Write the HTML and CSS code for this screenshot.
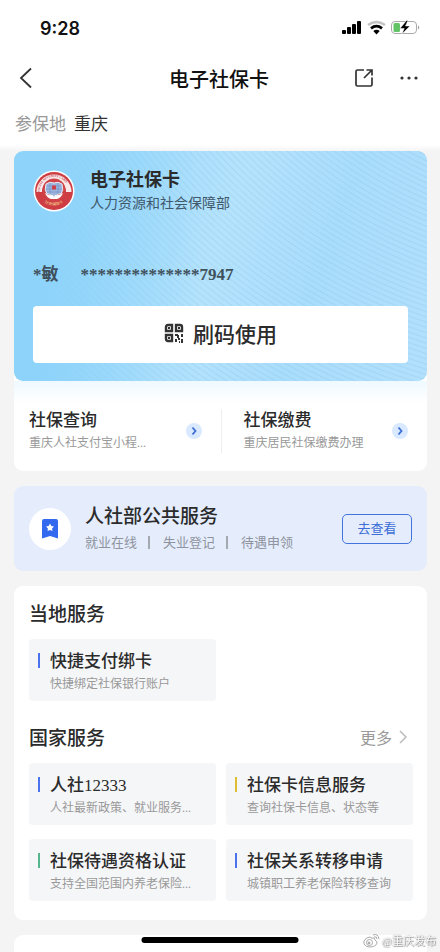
FILE: index.html
```html
<!DOCTYPE html>
<html lang="zh-CN">
<head>
    <meta charset="UTF-8">
    <meta name="viewport" content="width=device-width, initial-scale=1.0">
    <title>电子社保卡</title>
    <link rel="stylesheet" href="styles.css">
</head>
<body>
    <header class="header">
        <div class="status-bar">
            <span class="time">9:28</span>
            <svg width="80" height="16" viewBox="0 0 80 16" aria-hidden="true">
                <rect x="1" y="10" width="4" height="4" rx="1"/>
                <rect x="6" y="7" width="4" height="7" rx="1"/>
                <rect x="11" y="4" width="4" height="10" rx="1"/>
                <rect x="16" y="1" width="4" height="13" rx="1"/>
                <path d="M27 5Q35.500 -1 44 5" fill="none" stroke="#c4c4c4" stroke-width="2.400"/>
                <path d="M30 8.300Q35.500 4 41 8.300" fill="none" stroke="#000" stroke-width="2.800"/>
                <path d="M32.300 11Q35.500 8.600 38.700 11L35.500 14.500z"/>
                <rect x="50.500" y="1.500" width="25" height="12" rx="3.500" fill="#fff" stroke="#aaa"/>
                <rect x="52.500" y="3" width="6.500" height="9" rx="1.500" fill="#62c466"/>
                <path d="M65.500 0.500L59 8.500h4.200L61 14l8-8h-4.500l2.500-5.500z" stroke="#fff" stroke-width="0.500"/>
                <path d="M77 5.500q2.500 2 0 4z" fill="#999"/>
            </svg>
        </div>
        <nav class="nav-bar">
            <button class="icon-btn" type="button" aria-label="返回">
                <svg width="14" height="22" viewBox="0 0 14 22"><path d="M12 1.500L2 11l10 9.500" fill="none" stroke="#333" stroke-width="1.800"/></svg>
            </button>
            <h1>电子社保卡</h1>
            <div class="nav-actions">
                <button class="icon-btn" type="button" aria-label="分享">
                    <svg width="20" height="20" viewBox="0 0 20 20"><path d="M10 2H3.500Q2 2 2 3.500v13Q2 18 3.500 18h13q1.500 0 1.500-1.500V9.500M12.500 2H18v5.500M18 2l-8 8" fill="none" stroke="#333" stroke-width="1.700"/></svg>
                </button>
                <button class="icon-btn" type="button" aria-label="更多操作">
                    <svg width="20" height="20" viewBox="0 0 20 20" fill="#333"><circle cx="3" cy="10" r="1.600"/><circle cx="10" cy="10" r="1.600"/><circle cx="17" cy="10" r="1.600"/></svg>
                </button>
            </div>
        </nav>
        <div class="location"><span>参保地</span><strong>重庆</strong></div>
    </header>

    <main class="content">
        <section class="panel">
            <div class="card">
                <div class="card-head">
                    <svg class="emblem" width="42" height="42" viewBox="0 0 42 42" aria-hidden="true">
                        <defs><path id="arc-top" d="M7 24A14.300 14.300 0 1 1 35 24"/><path id="arc-bottom" d="M5 25A17.500 17.500 0 0 0 37 25"/></defs>
                        <circle cx="21" cy="21" r="20.500" fill="#fff"/>
                        <circle cx="21" cy="21" r="19" fill="#ce3d43"/>
                        <path d="M3.500 22A17.500 17.500 0 0 1 38.500 22L33 22A12 12 0 0 0 9 22z" fill="#f9e9e9"/>
                        <text font-size="3" font-weight="bold" fill="#c3373f"><textPath href="#arc-top" startOffset="2">SOCIAL SECURITY CARD</textPath></text>
                        <circle cx="21" cy="20" r="11.500" fill="#cf4349"/>
                        <path d="M13 14q4-3 8-1 4-2 8 1 2 6-1 10h-3l-2 3h-4l-2-3h-3q-3-4-1-10z" fill="#9eb6de" stroke="#e7e8ef"/>
                        <path d="M12 23q4 3 8 2l1 3 1-3q4 1 8-2-2 5-6 6h-6q-4-1-6-6z" fill="#fff"/>
                        <path d="M14 16h14M13.500 19h15M14 22h14M17 13v11M25 13v11" stroke="#7192c7" stroke-width="0.700"/>
                        <rect x="19" y="15.500" width="4" height="4" fill="#cf3f4b"/>
                        <text font-size="4" fill="#f5ce8b"><textPath href="#arc-bottom" startOffset="10">社会保障卡</textPath></text>
                    </svg>
                    <div>
                        <h2>电子社保卡</h2>
                        <p>人力资源和社会保障部</p>
                    </div>
                </div>
                <div class="card-number"><span>*敏</span><span>**************7947</span></div>
                <button class="scan-btn" type="button">
                    <svg width="20" height="20" viewBox="0 0 20 20" fill="none" stroke="#333" stroke-width="2.400" aria-hidden="true">
                        <path d="M8 2H4Q2 2 2 4v4h6zM12 2h4q2 0 2 2v4h-6zM8 18H4q-2 0-2-2v-4h6z"/>
                        <path d="M4 5h2M14 5h2M4 15h2" stroke-width="2"/>
                        <path d="M11 12h3M14 12v3M18 11v3M12 16v3M16 16h-2M15 19h1M18 16v3h-1" stroke-width="2"/>
                    </svg>
                    刷码使用
                </button>
            </div>
            <div class="quick-links">
                <a class="quick-link" href="#">
                    <div>
                        <h3>社保查询</h3>
                        <p>重庆人社支付宝小程...</p>
                    </div>
                    <svg width="16" height="16" viewBox="0 0 16 16"><circle cx="8" cy="8" r="8" fill="#d9e9ff"/><path d="M6.500 4.500L9.500 8l-3 3.500" fill="none" stroke="#3c6ed5" stroke-width="1.800"/></svg>
                </a>
                <a class="quick-link" href="#">
                    <div>
                        <h3>社保缴费</h3>
                        <p>重庆居民社保缴费办理</p>
                    </div>
                    <svg width="16" height="16" viewBox="0 0 16 16"><circle cx="8" cy="8" r="8" fill="#d9e9ff"/><path d="M6.500 4.500L9.500 8l-3 3.500" fill="none" stroke="#3c6ed5" stroke-width="1.800"/></svg>
                </a>
            </div>
        </section>

        <section class="banner">
            <div class="banner-icon">
                <svg width="16" height="20" viewBox="0 0 16 20" aria-hidden="true"><path d="M0 2Q0 0 2 0h12q2 0 2 2v17.500L8 17l-8 2.500z" fill="#3269ee"/><path d="M8 4.500l1.300 2.400 2.700.5-1.900 2 .3 2.700L8 11l-2.400 1.100.3-2.700-1.900-2 2.700-.5z" fill="#fff"/></svg>
            </div>
            <div class="banner-text">
                <h2>人社部公共服务</h2>
                <p><span>就业在线</span><span>失业登记</span><span>待遇申领</span></p>
            </div>
            <button class="view-btn" type="button">去查看</button>
        </section>

        <section class="services">
            <div class="section-title"><h2>当地服务</h2></div>
            <div class="service-grid">
                <a class="service" href="#"><h3>快捷支付绑卡</h3><p>快捷绑定社保银行账户</p></a>
            </div>
            <div class="section-title">
                <h2>国家服务</h2>
                <a class="more" href="#">更多
                    <svg width="8" height="14" viewBox="0 0 8 14" aria-hidden="true"><path d="M1 1l6 6-6 6" fill="none" stroke="#bbb" stroke-width="1.500"/></svg>
                </a>
            </div>
            <div class="service-grid">
                <a class="service" href="#"><h3>人社12333</h3><p>人社最新政策、就业服务...</p></a>
                <a class="service yellow" href="#"><h3>社保卡信息服务</h3><p>查询社保卡信息、状态等</p></a>
                <a class="service green" href="#"><h3>社保待遇资格认证</h3><p>支持全国范围内养老保险...</p></a>
                <a class="service" href="#"><h3>社保关系转移申请</h3><p>城镇职工养老保险转移查询</p></a>
            </div>
        </section>

        <section class="services">
            <div class="section-title"><h2>各地服务</h2></div>
        </section>
    </main>

    <div class="home-indicator"></div>
    <div class="watermark">
        <svg width="17" height="15" viewBox="0 0 17 15" fill="#fff" stroke="#aaa" aria-hidden="true">
            <path d="M7 4Q3 4 1 8q-1 5 5 6 7 0 8-4 0-2-2-3 0-3-4-2 0-1-1-1z"/>
            <circle cx="6.500" cy="9.500" r="3"/><circle cx="6" cy="10" r="1" fill="#999"/>
            <path d="M10 2q5-2 6 4M11 4q3-1 3 2" fill="none"/>
        </svg>
        <span>@重庆发布</span>
    </div>
</body>
</html>
```

FILE: styles.css
```css
* {
    box-sizing: border-box;
}
body {
    margin: 0;
    height: 100vh;
    overflow: hidden;
    background: #f4f4f4;
    color: #2b2b2b;
    font-family: "Liberation Serif", "Noto Sans CJK SC", sans-serif;
}
h1, h2, h3, p {
    margin: 0;
}
h2, h3 {
    font-weight: 500;
}
a {
    color: inherit;
    text-decoration: none;
}
svg {
    display: block;
    flex: none;
}
button {
    font-family: inherit;
    cursor: pointer;
}

/* Header */
.header {
    background: #fff;
}
.status-bar {
    display: flex;
    align-items: center;
    justify-content: space-between;
    height: 56px;
    padding: 0 19px 0 40px;
}
.time {
    font-family: Inter, sans-serif;
    font-size: 18px;
    font-weight: 600;
    color: #111;
}
.nav-bar {
    display: grid;
    grid-template-columns: 1fr auto 1fr;
    align-items: center;
    height: 44px;
    padding: 0 21px 0 19px;
}
.nav-bar h1 {
    font-size: 20px;
    font-weight: 500;
    color: #111;
}
.icon-btn {
    justify-self: start;
    padding: 0;
    border: none;
    background: none;
}
.nav-actions {
    display: flex;
    justify-content: flex-end;
    gap: 25px;
}
.location {
    display: flex;
    gap: 8px;
    height: 45px;
    padding: 6px 15px 0;
    font-size: 17px;
    line-height: 38px;
    color: #999;
}
.location strong {
    font-weight: 400;
    color: #333;
}

.content {
    display: flex;
    flex-direction: column;
    gap: 15px;
    padding: 6px 13px 0 14px;
    background: linear-gradient(#fff, #f4f4f4 6px);
}

/* Social security card */
.panel {
    border-radius: 9px;
    background: linear-gradient(#fff 230px, #eef9ff 230px, #fff 252px);
}
.card {
    padding: 16px 19px 18px;
    border-radius: 9px;
    background:
        linear-gradient(90deg, #8dd3fa 5%, rgba(141, 211, 250, 0) 45%),
        repeating-radial-gradient(circle at 585px -350px, rgba(70, 140, 190, 0) 0 3px, rgba(70, 140, 190, 0.12) 4px, rgba(70, 140, 190, 0) 5px),
        linear-gradient(110deg, #90d5fc 0%, #b5e3fc 48%, #a9ddfc 70%, #b2e0fc 100%);
}
.card-head {
    display: flex;
    align-items: center;
    gap: 15px;
}
.card-head h2 {
    font-size: 18px;
    line-height: 26px;
    font-weight: 700;
}
.card-head p {
    font-size: 14px;
    line-height: 22px;
    color: #40586b;
}
.card-number {
    display: flex;
    gap: 22px;
    margin: 48px 0 19px;
    font-size: 17px;
    line-height: 24px;
    font-weight: 700;
    color: #40505c;
}
.scan-btn {
    display: flex;
    align-items: center;
    justify-content: center;
    gap: 9px;
    width: 100%;
    height: 57px;
    padding: 0 8px 4px;
    border: none;
    border-radius: 4px;
    background: #fff;
    font-size: 21px;
    font-weight: 500;
    color: #2b2b2b;
}
.quick-links {
    display: grid;
    grid-template-columns: 1fr 1fr;
    padding: 28px 0 18px;
}
.quick-link {
    display: flex;
    align-items: center;
    justify-content: space-between;
    padding: 0 19px 0 15px;
}
.quick-link + .quick-link {
    padding-left: 22px;
    border-left: 1px solid #eee;
}
.quick-link h3 {
    font-size: 17px;
    line-height: 24px;
}
.quick-link p {
    font-size: 12px;
    line-height: 20px;
    color: #999;
}

/* Public services banner */
.banner {
    display: flex;
    align-items: center;
    height: 85px;
    padding: 0 15px;
    border-radius: 9px;
    background: #e5edfd;
}
.banner-icon {
    display: flex;
    align-items: center;
    justify-content: center;
    width: 42px;
    height: 42px;
    border-radius: 50%;
    background: #fff;
}
.banner-text {
    flex: 1;
    margin-left: 14px;
}
.banner-text h2 {
    font-size: 19px;
    line-height: 28px;
}
.banner-text p {
    display: flex;
    font-size: 13px;
    line-height: 24px;
    color: #8e939d;
}
.banner-text span + span::before {
    content: "";
    display: inline-block;
    width: 2px;
    height: 13px;
    margin: 0 13px 0 11px;
    background: #a3a8b1;
    vertical-align: -2px;
}
.view-btn {
    width: 70px;
    height: 30px;
    padding: 0 0 2px;
    border: 1px solid #4274dc;
    border-radius: 5px;
    background: none;
    font-size: 13px;
    color: #3c6ed5;
}

/* Service lists */
.services {
    padding: 0 14px 19px 15px;
    border-radius: 9px;
    background: #fff;
}
.section-title {
    display: flex;
    align-items: center;
    justify-content: space-between;
    height: 53px;
}
.section-title h2 {
    font-size: 19px;
}
.more {
    display: flex;
    align-items: center;
    gap: 7px;
    padding-right: 6px;
    font-size: 16px;
    color: #999;
}
.service-grid {
    display: grid;
    grid-template-columns: 1fr 1fr;
    gap: 14px 10px;
}
.service-grid + .section-title {
    height: 62px;
    padding-top: 9px;
}
.service {
    position: relative;
    height: 62px;
    padding: 10px 0 0 21px;
    border-radius: 4px;
    background: #f5f6f8;
    white-space: nowrap;
}
.service::before {
    content: "";
    position: absolute;
    top: 14px;
    left: 9px;
    width: 2px;
    height: 15px;
    background: #4c73ee;
}
.service.yellow::before {
    background: #dfbd33;
}
.service.green::before {
    background: #55b58f;
}
.service h3 {
    font-size: 17px;
    line-height: 25px;
}
.service p {
    font-size: 12px;
    line-height: 20px;
    color: #999;
}

.home-indicator {
    position: fixed;
    bottom: 9px;
    left: 50%;
    width: 157px;
    height: 6px;
    border-radius: 3px;
    background: #000;
    transform: translateX(-50%);
}
.watermark {
    position: fixed;
    right: 4px;
    bottom: 4px;
    display: flex;
    align-items: center;
    gap: 2px;
    font-size: 11px;
    color: #fff;
    text-shadow: 0 0 1px #777, 1px 1px 1px #999;
}
```
